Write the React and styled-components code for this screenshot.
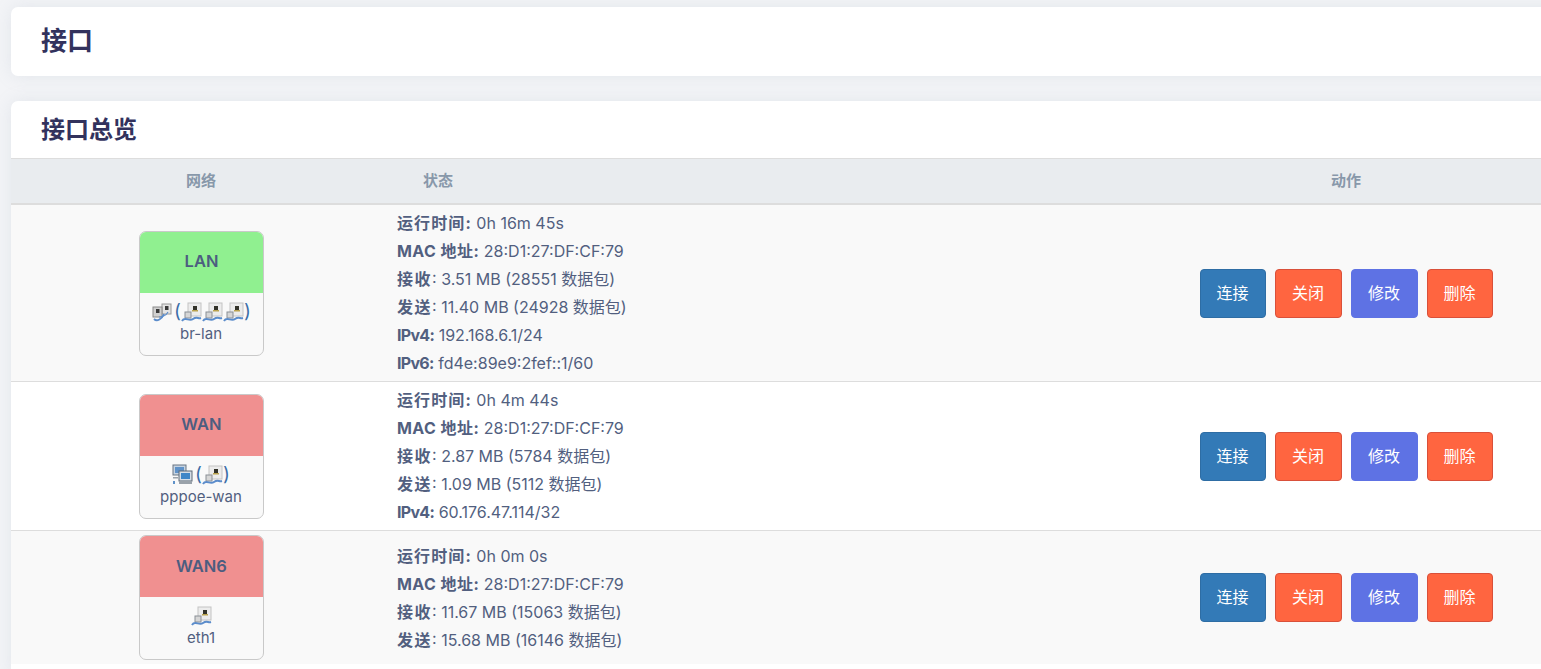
import React from 'react';
import styled, { createGlobalStyle } from 'styled-components';

const GlobalStyle = createGlobalStyle`
  html, body {
    margin: 0;
    height: 100%;
    overflow: hidden;
    background: #f3f4f7;
    font-family: "Inter", "Noto Sans CJK SC", sans-serif;
    color: #525f7f;
  }
`;

const Page = styled.div`
  width: 1700px;
  padding: 7px 0 0 11px;
  box-sizing: border-box;
`;

const TitleCard = styled.div`
  height: 69px;
  background: #fff;
  border-radius: 7px;
  box-shadow: 0 0 18px rgba(136, 152, 170, 0.15);
  padding: 0 30px 6px;
  box-sizing: border-box;
  display: flex;
  align-items: center;
  margin-bottom: 25px;
`;

const PageTitle = styled.h2`
  margin: 0;
  font-size: 26px;
  font-weight: 700;
  color: #32325d;
`;

const Panel = styled.div`
  background: #fff;
  border-radius: 7px 7px 0 0;
  box-shadow: 0 0 18px rgba(136, 152, 170, 0.15);
  padding-bottom: 12px;
`;

const SectionTitle = styled.h3`
  margin: 0;
  height: 57px;
  padding: 0 30px 5px;
  box-sizing: border-box;
  display: flex;
  align-items: center;
  font-size: 24px;
  font-weight: 700;
  color: #32325d;
`;

const Table = styled.div`
  width: 1530px;
`;

const HeadRow = styled.div`
  display: grid;
  grid-template-columns: 380px 1fr 390px;
  height: 47px;
  padding-bottom: 3px;
  box-sizing: border-box;
  align-items: center;
  background: #e9ecef;
  border-top: 1px solid #dddddd;
  border-bottom: 2px solid #dddddd;
  font-size: 15px;
  font-weight: 600;
  color: #8898aa;
`;

const HeadCell = styled.div`
  text-align: ${(p) => (p.$center ? 'center' : 'left')};
  padding-left: ${(p) => (p.$center ? 0 : '32px')};
`;

const Row = styled.div`
  display: grid;
  grid-template-columns: 380px 1fr 390px;
  align-items: center;
  padding: 4px 0;
  background: ${(p) => (p.$striped ? '#f9f9f9' : '#fff')};
  border-bottom: 1px solid #dddddd;

  &:last-child {
    border-bottom: 0;
  }
`;

const NetCell = styled.div`
  display: flex;
  justify-content: center;
`;

const NetCard = styled.div`
  width: 125px;
  height: 125px;
  box-sizing: border-box;
  border: 1px solid #c9c9c9;
  border-radius: 7px;
  overflow: hidden;
  background: #f9f9f9;
  text-align: center;
`;

const NetName = styled.div`
  height: 61px;
  padding: 0 0 2px 1px;
  box-sizing: border-box;
  display: flex;
  align-items: center;
  justify-content: center;
  background: ${(p) => p.$color};
  font-size: 16.5px;
  font-weight: 600;
  color: #4c5d80;
`;

const IconLine = styled.div`
  height: 22px;
  margin-top: 8px;
  display: flex;
  align-items: center;
  justify-content: center;
  font-size: 19px;
  color: #3d6ea8;
`;

const Paren = styled.span`
  margin: ${(p) => (p.$open ? '0 0 0 2px' : '0')};
  line-height: 22px;
`;

const DeviceName = styled.div`
  margin-top: 1px;
  font-size: 15px;
  line-height: 20px;
  color: #525f7f;
`;

const Status = styled.div`
  padding-left: 6px;
  font-size: 16px;
  line-height: 28px;
`;

const Label = styled.strong`
  font-weight: 700;
  letter-spacing: ${(p) => p.$spacing}px;
`;

const Actions = styled.div`
  display: flex;
  justify-content: center;
  gap: 9px;
`;

const ActionButton = styled.button`
  width: ${(p) => p.$width}px;
  height: 49px;
  padding: 0 0 3px;
  border: 1px solid ${(p) => p.$border};
  border-radius: 4px;
  background: ${(p) => p.$color};
  color: #fff;
  font-family: "Noto Sans CJK SC", sans-serif;
  font-size: 16px;
`;

const PortIcon = () => (
  <svg width="21" height="22" viewBox="0 0 21 22">
    <rect x="7" y="2" width="13" height="13" fill="#ececec" stroke="#c4c4c4" strokeWidth="1" />
    <rect x="12" y="5" width="4" height="4" fill="#33332a" />
    <rect x="11" y="9" width="6" height="1.5" fill="#b9a24e" />
    <rect x="4" y="11" width="6" height="6" fill="#d6d6d6" stroke="#8a8f96" strokeWidth="1" />
    <path d="M1 20 C4 15 8 21 12 18 S17 18 20 17" fill="none" stroke="#5b8ccb" strokeWidth="2" />
  </svg>
);

const BridgeIcon = () => (
  <svg width="21" height="20" viewBox="0 0 21 20">
    <rect x="11" y="2" width="9" height="10" fill="#e4e4e4" stroke="#9a9a9a" strokeWidth="1" />
    <rect x="14" y="4" width="3.5" height="4" fill="#3a3a3a" />
    <rect x="2" y="5" width="9" height="10" fill="#d0d0d0" stroke="#8a8a8a" strokeWidth="1" />
    <rect x="5" y="7" width="3.5" height="4" fill="#3a3a3a" />
    <path d="M3 17 C6 20 11 17 13 12" fill="none" stroke="#5b8ccb" strokeWidth="1.8" />
    <path d="M8 15 C10 15 15 14 17 10" fill="none" stroke="#5b8ccb" strokeWidth="1.2" />
  </svg>
);

const PppoeIcon = () => (
  <svg width="21" height="21" viewBox="0 0 21 21">
    <rect x="1" y="1" width="13" height="10" fill="#c5d3e2" stroke="#6a7683" strokeWidth="1" />
    <rect x="3" y="3" width="9" height="6" fill="#5f92c9" />
    <rect x="7" y="7" width="13" height="10" fill="#d5dde6" stroke="#5e6a77" strokeWidth="1" />
    <rect x="9" y="9" width="9" height="6" fill="#3f86c7" />
    <rect x="7" y="17" width="13" height="3" fill="#9aa2aa" />
    <rect x="1" y="13" width="5" height="1.5" fill="#9aa2aa" />
    <rect x="1" y="17" width="2" height="3" fill="#5f92c9" />
  </svg>
);

const icons = { port: PortIcon, bridge: BridgeIcon, pppoe: PppoeIcon };

const uptime = { label: '运行时间:', spacing: 1.1 };
const mac = { label: 'MAC 地址:', spacing: 0.45 };
const rx = { label: '接收', spacing: 1.5 };
const tx = { label: '发送', spacing: 1.5 };
const ip4 = { label: 'IPv4:', spacing: -0.7 };
const ip6 = { label: 'IPv6:', spacing: -0.7 };

const rows = [
  {
    name: 'LAN',
    color: '#90f090',
    device: 'br-lan',
    lead: 'bridge',
    members: ['port', 'port', 'port'],
    status: [
      [uptime, ' 0h 16m 45s'],
      [mac, ' 28:D1:27:DF:CF:79'],
      [rx, ': 3.51 MB (28551 数据包)'],
      [tx, ': 11.40 MB (24928 数据包)'],
      [ip4, ' 192.168.6.1/24'],
      [ip6, ' fd4e:89e9:2fef::1/60'],
    ],
  },
  {
    name: 'WAN',
    color: '#f09090',
    device: 'pppoe-wan',
    lead: 'pppoe',
    members: ['port'],
    status: [
      [uptime, ' 0h 4m 44s'],
      [mac, ' 28:D1:27:DF:CF:79'],
      [rx, ': 2.87 MB (5784 数据包)'],
      [tx, ': 1.09 MB (5112 数据包)'],
      [ip4, ' 60.176.47.114/32'],
    ],
  },
  {
    name: 'WAN6',
    color: '#f09090',
    device: 'eth1',
    lead: 'port',
    members: [],
    status: [
      [uptime, ' 0h 0m 0s'],
      [mac, ' 28:D1:27:DF:CF:79'],
      [rx, ': 11.67 MB (15063 数据包)'],
      [tx, ': 15.68 MB (16146 数据包)'],
    ],
  },
];

const buttons = [
  { label: '连接', width: 66, color: '#337ab7', border: '#2e6da4' },
  { label: '关闭', width: 67, color: '#ff6540', border: '#d9503a' },
  { label: '修改', width: 67, color: '#5e72e4', border: '#5e72e4' },
  { label: '删除', width: 66, color: '#ff6540', border: '#d9503a' },
];

export default function App() {
  return (
    <Page>
      <GlobalStyle />
      <TitleCard>
        <PageTitle>接口</PageTitle>
      </TitleCard>
      <Panel>
        <SectionTitle>接口总览</SectionTitle>
        <Table>
          <HeadRow>
            <HeadCell $center>网络</HeadCell>
            <HeadCell>状态</HeadCell>
            <HeadCell $center>动作</HeadCell>
          </HeadRow>
          {rows.map((row, i) => {
            const Lead = icons[row.lead];
            return (
              <Row key={row.name} $striped={i % 2 === 0}>
                <NetCell>
                  <NetCard>
                    <NetName $color={row.color}>{row.name}</NetName>
                    <IconLine>
                      <Lead />
                      {row.members.length > 0 && <Paren $open>(</Paren>}
                      {row.members.map((m, j) => {
                        const Member = icons[m];
                        return <Member key={j} />;
                      })}
                      {row.members.length > 0 && <Paren>)</Paren>}
                    </IconLine>
                    <DeviceName>{row.device}</DeviceName>
                  </NetCard>
                </NetCell>
                <Status>
                  {row.status.map(([label, value]) => (
                    <div key={label.label}>
                      <Label $spacing={label.spacing}>{label.label}</Label>
                      {value}
                    </div>
                  ))}
                </Status>
                <Actions>
                  {buttons.map((b) => (
                    <ActionButton key={b.label} $width={b.width} $color={b.color} $border={b.border}>
                      {b.label}
                    </ActionButton>
                  ))}
                </Actions>
              </Row>
            );
          })}
        </Table>
      </Panel>
    </Page>
  );
}
